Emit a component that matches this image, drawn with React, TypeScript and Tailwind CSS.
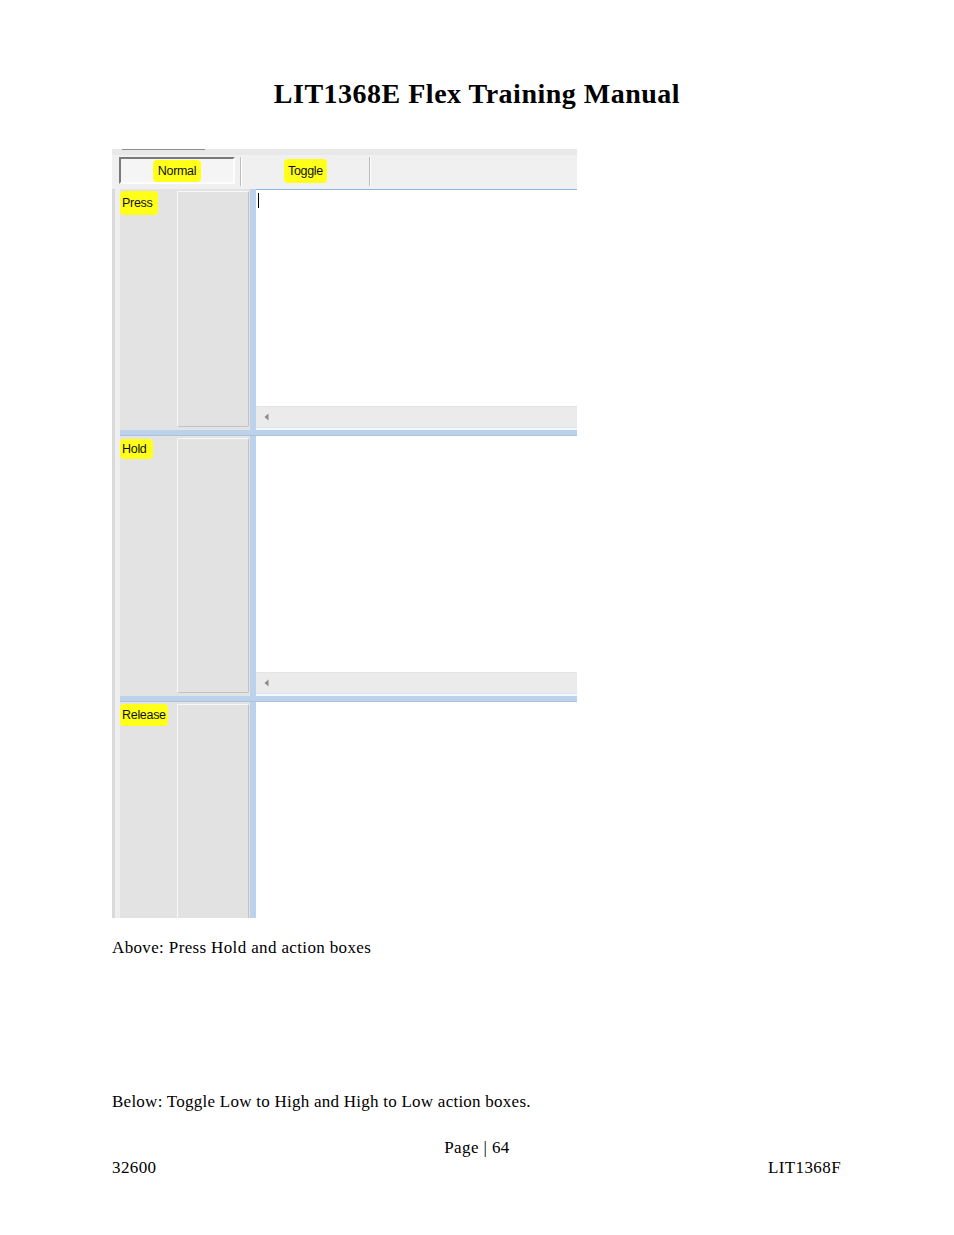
import React from "react";

// left-pointing arrow of the horizontal scrollbar
const ArrowLeft = () => (
  <svg width="5" height="8" viewBox="0 0 5 8">
    <path d="M4.5 0.5 L0.5 4 L4.5 7.5 Z" fill="#8a8a8a" />
  </svg>
);

const Highlight = ({ text, className }: { text: string; className?: string }) => (
  <span
    className={`inline-block rounded-[4px] bg-[#ffff1a] text-[12.5px] leading-[14px] tracking-[-0.3px] text-[#111] ${className ?? ""}`}
  >
    {text}
  </span>
);

type SectionProps = {
  label: string;
  height: string;
  scroll?: boolean;
  first?: boolean;
  last?: boolean;
  labelClass?: string;
};

const Section = ({ label, height, scroll, first, last, labelClass }: SectionProps) => (
  <div className={`flex ${height}`}>
    {/* left strip */}
    <div className="w-[8px] border-l-[3px] border-[#dadada] bg-[#eeeeee]" />
    {/* label column */}
    <div className="w-[57px] bg-[#e3e3e3]">
      <Highlight text={label} className={labelClass} />
    </div>
    {/* empty box */}
    <div className={`w-[73px] bg-[#e3e3e3] pt-[2px] pr-[1px] ${last ? "" : "pb-[3px]"}`}>
      <div
        className={`h-full rounded-t-[2px] border border-[#c2c2c2] border-t-[#f7f7f7] border-l-[#f7f7f7] bg-[#e2e2e2] ${
          last ? "border-b-0" : "rounded-b-[2px]"
        }`}
      />
    </div>
    {/* blue splitter */}
    <div className="w-[6px] bg-[#bcd2ea]" />
    {/* action text area */}
    <div className={`flex flex-1 flex-col bg-white ${first ? "border-t border-[#8db8e4]" : ""}`}>
      <div className="flex-1 pl-[2px] pt-[3px]">
        {first && <div className="h-[15px] w-[1px] bg-black" />}
      </div>
      {scroll && (
        <>
          <div className="flex h-[21px] items-center border-t border-[#e4e4e4] bg-[#ebebeb] pl-[8px]">
            <ArrowLeft />
          </div>
          <div className="h-[3px] border-t border-[#d6e4f3] bg-[#f4f8fc]" />
        </>
      )}
    </div>
  </div>
);

const Splitter = () => (
  <div className="flex h-[6px]">
    <div className="w-[8px] border-l-[3px] border-[#dadada] bg-[#eeeeee]" />
    <div className="flex-1 border-b border-[#a9c3df] bg-[#bcd2ea]" />
  </div>
);

const App = () => {
  return (
    <div className="min-h-[1235px] w-[954px] bg-white font-['Liberation_Serif',serif] text-black">
      <h1 className="pt-[78px] text-center text-[28px] font-bold leading-[32px] tracking-[0.5px]">
        LIT1368E Flex Training Manual
      </h1>

      {/* embedded screenshot */}
      <div className="ml-[112px] mt-[39px] flex h-[769px] w-[465px] flex-col overflow-hidden bg-[#f0f0f0] font-['Liberation_Sans',Arial,sans-serif]">
        <div className="h-[6px] bg-[#e8e8e8] pl-[10px]">
          <div className="h-[1px] w-[83px] bg-[#8c8c8c]" />
        </div>
        <div className="flex h-[34px] items-start bg-[#f0f0f0] pt-[2px]">
          <div className="ml-[7px] flex h-[27px] w-[116px] items-center justify-center border-2 border-[#7a7a7a] border-r-[#fdfdfd] border-b-[#fdfdfd] bg-[#f5f5f5]">
            <Highlight text="Normal" className="px-[5px] py-[4px]" />
          </div>
          <div className="ml-[5px] h-[29px] w-[2px] border-l border-[#bdbdbd] bg-white" />
          <div className="flex h-[27px] w-[127px] items-center justify-center">
            <Highlight text="Toggle" className="px-[4px] py-[5px]" />
          </div>
          <div className="h-[29px] w-[2px] border-l border-[#bdbdbd] bg-white" />
        </div>

        <Section label="Press" height="h-[241px]" scroll first labelClass="mt-[2px] pl-[2px] pr-[6px] py-[5px]" />
        <Splitter />
        <Section label="Hold" height="h-[260px]" scroll labelClass="mt-[1px] pl-[2px] pr-[6px] py-[3px]" />
        <Splitter />
        <Section label="Release" height="h-[216px]" last labelClass="mt-[1px] pl-[2px] pr-[2px] py-[4px]" />
      </div>

      <p className="ml-[112px] mt-[20px] text-[17px] leading-[20px] tracking-[0.36px]">
        Above: Press Hold and action boxes
      </p>
      <p className="ml-[112px] mt-[134px] text-[17px] leading-[20px] tracking-[0.25px]">
        Below: Toggle Low to High and High to Low action boxes.
      </p>
      <p className="mt-[26px] text-center text-[17px] leading-[20px] tracking-[0.4px]">Page | 64</p>
      <div className="flex justify-between pl-[112px] pr-[113px] text-[17px] leading-[20px] tracking-[0.4px]">
        <span>32600</span>
        <span>LIT1368F</span>
      </div>
    </div>
  );
};

export default App;
